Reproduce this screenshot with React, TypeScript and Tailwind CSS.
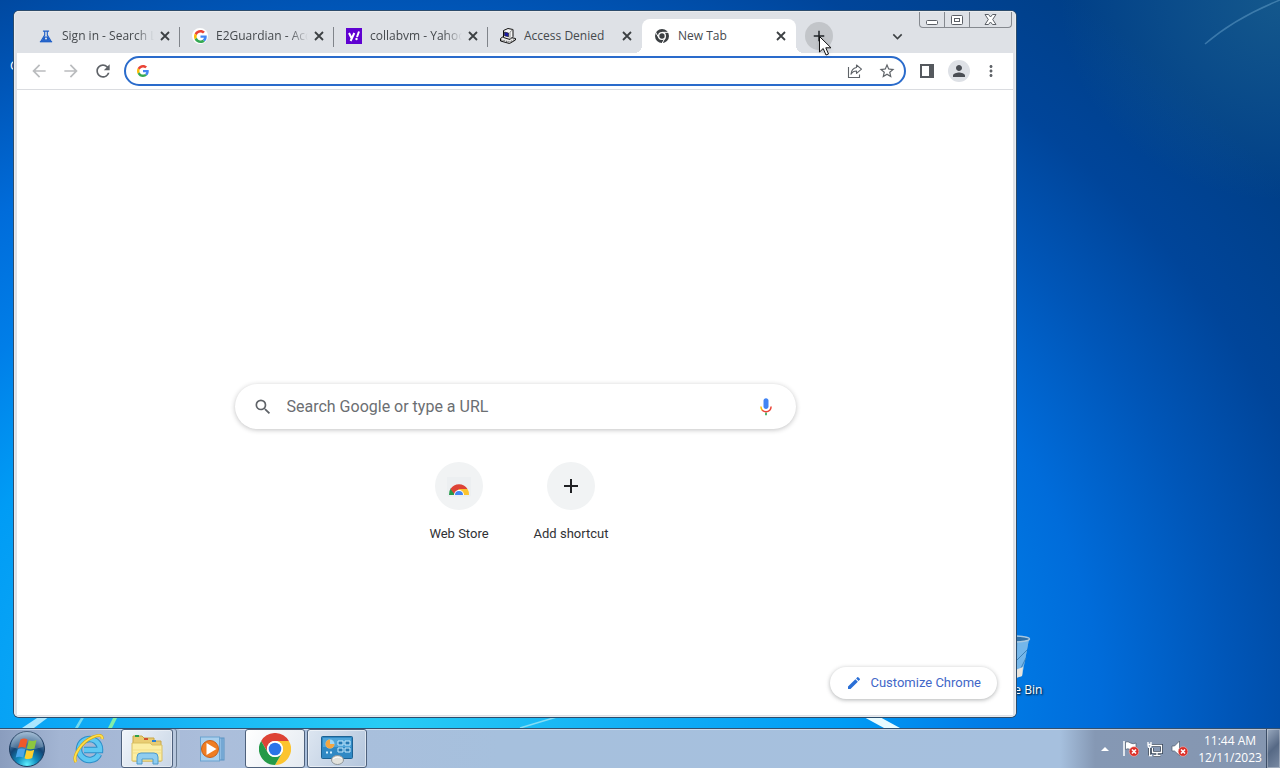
import type { ReactNode } from "react";
import {
  MdAdd,
  MdArrowBack,
  MdArrowForward,
  MdEdit,
  MdKeyboardArrowDown,
  MdMoreVert,
  MdPerson,
  MdRefresh,
  MdSearch,
  MdStarBorder,
} from "react-icons/md";

function GoogleIcon({ size = 16 }: { size?: number }) {
  return (
    <svg width={size} height={size} viewBox="0 0 48 48" aria-hidden="true">
      <path fill="#EA4335" d="M24 9.5c3.54 0 6.71 1.22 9.21 3.6l6.85-6.85C35.9 2.38 30.47 0 24 0 14.62 0 6.51 5.38 2.56 13.22l7.98 6.19C12.43 13.72 17.74 9.5 24 9.5z" />
      <path fill="#4285F4" d="M46.98 24.55c0-1.57-.15-3.09-.38-4.55H24v9.02h12.94c-.58 2.96-2.26 5.48-4.78 7.18l7.73 6c4.51-4.18 7.09-10.36 7.09-17.65z" />
      <path fill="#FBBC05" d="M10.53 28.59c-.48-1.45-.76-2.99-.76-4.59s.27-3.14.76-4.59l-7.98-6.19C.92 16.46 0 20.12 0 24c0 3.88.92 7.54 2.56 10.78l7.97-6.19z" />
      <path fill="#34A853" d="M24 48c6.48 0 11.93-2.13 15.89-5.81l-7.73-6c-2.15 1.45-4.92 2.3-8.16 2.3-6.26 0-11.57-4.22-13.47-9.91l-7.98 6.19C6.51 42.62 14.62 48 24 48z" />
    </svg>
  );
}

function ChromeMono() {
  return (
    <svg width="16" height="16" viewBox="0 0 48 48" aria-hidden="true">
      <circle cx="24" cy="24" r="21" fill="#3c4043" />
      <path d="M24 13H45M14.5 29.5L4 11.5M33.5 29.5L23 48" stroke="#fff" strokeWidth="3" />
      <circle cx="24" cy="24" r="12" fill="#fff" />
      <circle cx="24" cy="24" r="8" fill="#3c4043" />
    </svg>
  );
}

function ChromeLogo() {
  return (
    <svg width="32" height="32" viewBox="0 0 48 48" aria-hidden="true">
      <path fill="#dd4336" d="M3.2 12A24 24 0 0 1 44.8 12H24A12 12 0 0 0 13.6 30Z" />
      <path fill="#fcc42f" d="M44.8 12A24 24 0 0 1 24 48L34.4 30A12 12 0 0 0 24 12Z" />
      <path fill="#249a48" d="M24 48A24 24 0 0 1 3.2 12L13.6 30A12 12 0 0 0 34.4 30Z" />
      <circle cx="24" cy="24" r="12" fill="#fff" />
      <circle cx="24" cy="24" r="9.5" fill="#2b74e8" />
    </svg>
  );
}

function FlaskIcon() {
  return (
    <svg width="14" height="14" viewBox="0 0 16 16" aria-hidden="true">
      <path d="M4.5 2.5H11.5M6.5 2.5V7L2.5 13.5H13.5L9.500 7V2.500" fill="none" stroke="#1f5fc8" strokeWidth="1.3" strokeLinejoin="round" />
      <path d="M5.800 8.500H10.200L13 13.300H3Z" fill="#1f5fc8" />
      <path d="M1 14.500H15" stroke="#1f5fc8" strokeWidth="1.5" />
      <circle cx="8" cy="10.800" r="1.2" fill="#dee1e6" />
    </svg>
  );
}

function YahooIcon() {
  return (
    <svg width="16" height="16" viewBox="0 0 16 16" aria-hidden="true">
      <rect width="16" height="16" fill="#5f01d1" />
      <path d="M3 5L5.600 10.200M8.300 5L4.600 13M11 9L13 3.500" fill="none" stroke="#fff" strokeWidth="2" />
      <circle cx="10.500" cy="11" r="1.200" fill="#fff" />
    </svg>
  );
}

function ComputerIcon() {
  return (
    <svg width="16" height="16" viewBox="0 0 16 16" aria-hidden="true" stroke="#111" strokeWidth="1" strokeLinejoin="round">
      <path d="M.5 10.500L4 8L15.500 10.500V12L9.500 15.500L.5 13Z" fill="#e9e9e9" />
      <path d="M1 12L9.500 14L15 11.500" fill="none" stroke="#555" strokeDasharray="1.500 1" />
      <path d="M3.500 2.500L8 .5L13 1.500V8.500L10 11.500L3.500 9.500Z" fill="#f6f6f6" />
      <path d="M10 4V11.500M10 4L13 1.500" fill="none" stroke="#666" strokeWidth=".7" />
      <path d="M4.500 4L8.500 5V8.800L4.500 7.800Z" fill="#1a1aa8" stroke="#111" strokeWidth=".6" />
    </svg>
  );
}

function CloseIcon() {
  return (
    <svg width="10" height="10" viewBox="0 0 10 10" stroke="currentColor" strokeWidth="1.8" aria-hidden="true">
      <path d="M1 1L9 9M9 1L1 9" />
    </svg>
  );
}

function ShareIcon() {
  return (
    <svg width="18" height="18" viewBox="0 0 18 18" fill="none" stroke="#5f6368" strokeWidth="1.1" aria-hidden="true">
      <path d="M2.500 5V15.500H13.500V12.500" />
      <path d="M10.500 3L15.500 7.200L10.500 11.400V9C7.800 9 6.200 10 5 12.200C5.300 8.600 7.200 6 10.500 5.500Z" strokeLinejoin="round" />
    </svg>
  );
}

function MicIcon() {
  return (
    <svg width="20" height="20" viewBox="0 0 24 24" aria-hidden="true">
      <path fill="#4285f4" d="M12 14.500c1.700 0 3-1.300 3-3V4.500c0-1.700-1.300-3-3-3s-3 1.300-3 3v7c0 1.700 1.300 3 3 3z" />
      <path fill="#34a853" d="M11 18.500h2V22h-2z" />
      <path fill="none" stroke="#fbbc04" strokeWidth="1.800" d="M5.900 11.500c0 1.900.7 3.500 1.800 4.500" />
      <path fill="none" stroke="#ea4335" strokeWidth="1.800" d="M7.500 15.800c2.400 2.400 6.600 2.400 9 0c1-1 1.600-2.500 1.600-4.300" />
    </svg>
  );
}

function WebStoreIcon() {
  return (
    <svg width="24" height="24" viewBox="0 0 24 24" aria-hidden="true">
      <path d="M0 3H24V21a2 2 0 0 1-2 2H2a2 2 0 0 1-2-2Z" fill="#eceff1" />
      <path d="M2 21A10 10 0 0 1 4 14L9 21Z" fill="#249a48" />
      <path d="M3.500 15A10 10 0 0 1 20.500 15H12L8 21Z" fill="#dd4336" />
      <path d="M12 15H20.500A10 10 0 0 1 22 21H12Z" fill="#fcc42f" />
      <path d="M7 21A5 5 0 0 1 17 21Z" fill="#fff" />
      <path d="M8 21A4 4 0 0 1 16 21Z" fill="#4285f4" />
    </svg>
  );
}

function CursorIcon() {
  return (
    <svg width="14" height="21" viewBox="0 0 14 21" aria-hidden="true" className="pointer-events-none absolute top-[14px] left-[14px] drop-shadow">
      <path d="M.5 .5V16L4.200 12.500L7 19L9.500 18L6.800 11.800H12Z" fill="#fff" stroke="#111" />
    </svg>
  );
}

function StartOrb() {
  return (
    <svg width="38" height="38" viewBox="0 0 38 38" aria-hidden="true">
      <defs>
        <radialGradient id="orb" cx=".5" cy=".95" r=".95">
          <stop offset="0" stopColor="#5ff0ff" />
          <stop offset=".3" stopColor="#128fc0" />
          <stop offset=".6" stopColor="#134575" />
          <stop offset="1" stopColor="#8fb0cf" />
        </radialGradient>
      </defs>
      <circle cx="19" cy="19" r="17.500" fill="url(#orb)" stroke="#1d3b5e" />
      <path d="M3 17A16 16 0 0 1 35 17Q19 22 3 17Z" fill="#fff" opacity=".22" />
      <path d="M12.500 9.500Q16 7.500 19.500 9.500L17.500 18Q14 16.200 10 18Z" fill="#f0592a" />
      <path d="M20.800 10.300Q24.500 12 28.500 10L26.500 18.500Q22.500 20 18.800 18.500Z" fill="#8cc63f" />
      <path d="M9.700 19.300Q13.500 17.500 17.200 19.300L15.200 27.500Q11.500 25.800 7.700 27.500Z" fill="#4aa5ea" />
      <path d="M18.500 20Q22.200 21.500 26.200 19.800L24.200 28Q20.200 30 16.500 28.200Z" fill="#fdd02f" />
    </svg>
  );
}

function ExplorerE() {
  return (
    <svg width="32" height="32" viewBox="0 0 32 32" aria-hidden="true">
      <path d="M26 21A10.500 10.500 0 1 1 27 17H11" fill="none" stroke="#2c8fc9" strokeWidth="6.500" />
      <path d="M26 21A10.500 10.500 0 1 1 27 17H11" fill="none" stroke="#5fc8f2" strokeWidth="4.500" />
      <path d="M3 29C-1 24 8 9 20 4C26 1.500 30 2 29 6" fill="none" stroke="#d9a916" strokeWidth="3" />
      <path d="M3 29C-1 24 8 9 20 4C26 1.500 30 2 29 6" fill="none" stroke="#ffe04a" strokeWidth="1.800" />
    </svg>
  );
}

function FolderIcon() {
  return (
    <svg width="34" height="32" viewBox="0 0 34 32" aria-hidden="true">
      <path d="M3 3H12L14 5H24V8H31V28H3Z" fill="#e9cd73" stroke="#c9a748" />
      <path d="M5 3H9" stroke="#2fa04a" strokeWidth="2" />
      <path d="M14 6H18" stroke="#d0502d" strokeWidth="2" />
      <path d="M22 8H26" stroke="#2e80d0" strokeWidth="2" />
      <path d="M2 10H20L22 12H32V28H2Z" fill="#fbeea4" stroke="#d9bf62" />
      <path d="M3 17H31M3 20H31" stroke="#f3dd84" />
      <path d="M7 31V24Q7 20 11 20H24Q28 20 28 24V31H23V26H12V31Z" fill="#8fcdf0" stroke="#4e9acb" />
    </svg>
  );
}

function PlayerIcon() {
  return (
    <svg width="28" height="28" viewBox="0 0 28 28" aria-hidden="true">
      <rect x="5" y="3" width="20" height="22" fill="#8fbce2" stroke="#5b93c4" />
      <path d="M23 3V25" stroke="#5b93c4" />
      <rect x="1.500" y="2" width="19" height="24" fill="#a9d0ee" stroke="#6ba3d0" />
      <circle cx="11" cy="14" r="8.500" fill="#ef7d22" stroke="#c9601a" />
      <path d="M7.500 8L17.500 14L7.500 20Z" fill="#fff" />
    </svg>
  );
}

function ControlPanelIcon() {
  return (
    <svg width="34" height="32" viewBox="0 0 34 32" aria-hidden="true">
      <rect x="1.500" y="3.500" width="31" height="22" rx="1" fill="#3089c4" stroke="#1c6293" />
      <rect x="3" y="5" width="28" height="9" fill="#4fa5d9" />
      <circle cx="10" cy="11" r="4.500" fill="#9ed7f5" />
      <path d="M10 11V6.500A4.500 4.500 0 1 0 14.500 11Z" fill="#f4a640" />
      <path d="M18 8H23V12H18ZM25 8H30V12H25ZM18 15H23V19H18ZM25 15H30V19H25Z" fill="#2479b3" stroke="#c8ecff" />
      <path d="M6 19.500H8M10 19.500H12" stroke="#d6f2ff" strokeWidth="2" />
      <ellipse cx="17.500" cy="27" rx="6" ry="4.500" fill="#e2e2dc" stroke="#8f9699" />
      <path d="M13 26Q17 22.500 22 25.500" fill="none" stroke="#fff" />
    </svg>
  );
}

function ErrorBadge() {
  return (
    <>
      <circle cx="12" cy="11.500" r="4.800" fill="#dc2f28" stroke="#f3b7b2" strokeWidth=".6" />
      <path d="M10 9.500L14 13.500M14 9.500L10 13.500" stroke="#fff" strokeWidth="1.600" />
    </>
  );
}

function IconButton({ label, children }: { label: string; children: ReactNode }) {
  return (
    <button aria-label={label} className="flex size-7 shrink-0 items-center justify-center rounded-full text-[#5f6368]">
      {children}
    </button>
  );
}

const tabs = [
  { title: "Sign in - Search L", icon: <FlaskIcon /> },
  { title: "E2Guardian - Acc", icon: <GoogleIcon size={13} />, plate: true },
  { title: "collabvm - Yahoo", icon: <YahooIcon /> },
  { title: "Access Denied", icon: <ComputerIcon /> },
  { title: "New Tab", icon: <ChromeMono />, active: true },
];

type TabProps = {
  title: string;
  icon: ReactNode;
  active?: boolean;
  plate?: boolean;
  divider: boolean;
};

function Tab({ title, icon, active, plate, divider }: TabProps) {
  return (
    <div className={`relative flex h-[34px] w-[154px] items-center pr-[7px] pl-3 ${active ? "rounded-t-lg bg-white" : ""}`}>
      <button className="flex h-full min-w-0 flex-1 items-center gap-2 text-left text-xs text-[#45494d]">
        <span className={`flex size-4 shrink-0 items-center justify-center rounded-full ${plate ? "bg-white" : ""}`}>{icon}</span>
        <span className={`w-[92px] overflow-hidden whitespace-nowrap ${divider ? "mask-r-from-80%" : ""}`}>{title}</span>
      </button>
      <button aria-label={`Close ${title}`} className="flex size-4 shrink-0 items-center justify-center text-[#3c4043]">
        <CloseIcon />
      </button>
      {divider && <span className="absolute top-2 right-0 h-5 w-px bg-[#80848a]" />}
      {active && (
        <>
          <span className="absolute bottom-0 -left-2 size-2 bg-[radial-gradient(circle_at_0_0,transparent_8px,white_8px)]" />
          <span className="absolute -right-2 bottom-0 size-2 bg-[radial-gradient(circle_at_100%_0,transparent_8px,white_8px)]" />
        </>
      )}
    </div>
  );
}

function WindowControls() {
  return (
    <div className="flex h-4 self-start overflow-hidden rounded-b-[4px] border border-t-0 border-[#85898f] text-[#5b5f66]">
      <button aria-label="Minimize" className="flex w-[25px] items-center justify-center border-r border-[#85898f]">
        <svg width="14" height="12" viewBox="0 0 14 12" fill="#fff" stroke="currentColor">
          <rect x="1.500" y="6.500" width="11" height="4" rx="1" />
        </svg>
      </button>
      <button aria-label="Maximize" className="flex w-[25px] items-center justify-center border-r border-[#85898f]">
        <svg width="12" height="12" viewBox="0 0 12 12" fill="#fff" stroke="currentColor">
          <rect x=".5" y="1.500" width="11" height="9" rx="1" />
          <rect x="3.500" y="4.500" width="5" height="3" />
        </svg>
      </button>
      <button aria-label="Close window" className="flex w-[41px] items-center justify-center">
        <svg width="13" height="11" viewBox="0 0 13 11" fill="#fff" stroke="currentColor">
          <path d="M1 .5H4.500L6.500 3L8.500 .5H12L8.700 5.500L12 10.500H8.500L6.500 8L4.500 10.500H1L4.300 5.500Z" />
        </svg>
      </button>
    </div>
  );
}

function Toolbar() {
  return (
    <div className="flex h-[37px] items-center gap-[7px] border-b border-[#dadce0] bg-white px-2">
      <div className="flex gap-1">
        <button aria-label="Back" className="flex size-7 items-center justify-center text-[#babcbe]">
          <MdArrowBack size={20} />
        </button>
        <button aria-label="Forward" className="flex size-7 items-center justify-center text-[#babcbe]">
          <MdArrowForward size={20} />
        </button>
        <IconButton label="Reload">
          <MdRefresh size={20} />
        </IconButton>
      </div>
      <div className="flex h-[30px] flex-1 items-center rounded-full border-2 border-[#2a6bcb] bg-white pr-[3px] pl-[11px]">
        <GoogleIcon size={12} />
        <input aria-label="Address and search bar" className="ml-2 min-w-0 flex-1 bg-transparent text-sm outline-none" />
        <div className="flex gap-1">
          <IconButton label="Share this page">
            <ShareIcon />
          </IconButton>
          <IconButton label="Bookmark this tab">
            <MdStarBorder size={18} />
          </IconButton>
        </div>
      </div>
      <div className="flex gap-1">
        <IconButton label="Side panel">
          <svg width="14" height="14" viewBox="0 0 14 14" aria-hidden="true">
            <path d="M1 1H13V13H1Z" fill="none" stroke="#55595e" strokeWidth="2" />
            <path d="M9 1H13V13H9Z" fill="#55595e" />
          </svg>
        </IconButton>
        <IconButton label="Profile">
          <span className="flex size-[22px] items-center justify-center rounded-full bg-[#dee1e6]">
            <MdPerson size={18} color="#4a4e54" />
          </span>
        </IconButton>
        <IconButton label="Menu">
          <MdMoreVert size={18} />
        </IconButton>
      </div>
    </div>
  );
}

function NewTabPage() {
  return (
    <main className="relative flex flex-1 flex-col items-center bg-white pt-[294px] font-[Roboto,sans-serif]">
      <label className="flex h-[45px] w-full max-w-[561px] items-center rounded-full bg-white pr-5 pl-[18px] shadow-[0_1px_5px_rgba(32,33,36,0.28)]">
        <MdSearch size={20} color="#5f6368" />
        <input
          aria-label="Search Google or type a URL"
          placeholder="Search Google or type a URL"
          className="ml-[14px] min-w-0 flex-1 bg-transparent text-base outline-none placeholder:text-[#6b6e72]"
        />
        <button aria-label="Search by voice">
          <MicIcon />
        </button>
      </label>

      <div className="mt-[33px] flex">
        <a href="#web-store" className="flex w-28 flex-col items-center gap-[14px] text-[13px] leading-5 text-[#303134]">
          <span className="flex size-12 items-center justify-center rounded-full bg-[#f1f3f4]">
            <WebStoreIcon />
          </span>
          Web Store
        </a>
        <button className="flex w-28 flex-col items-center gap-[14px] text-[13px] leading-5 text-[#303134]">
          <span className="flex size-12 items-center justify-center rounded-full bg-[#f1f3f4]">
            <MdAdd size={24} color="#202124" />
          </span>
          Add shortcut
        </button>
      </div>

      <button className="absolute right-4 bottom-4 flex h-8 items-center gap-2 rounded-full bg-white px-4 text-[13px] text-[#4267c8] shadow-[0_1px_4px_rgba(60,64,67,0.4)]">
        <MdEdit size={16} color="#2a6fd6" />
        Customize Chrome
      </button>
    </main>
  );
}

function BrowserWindow() {
  return (
    <section className="absolute top-[11px] right-[264px] bottom-[11px] left-[14px] flex flex-col rounded-[5px] bg-[#dee1e6] px-[3px] pt-px pb-[2px] shadow-[inset_0_0_0_1px_#e9ebee,0_0_0_1px_#2c4c6c]">
      <div className="flex h-[41px] items-end pl-[9px]">
        {tabs.map((tab, i) => (
          <Tab key={tab.title} {...tab} divider={i < 3} />
        ))}
        <div className="relative mb-[3px] ml-[9px] flex">
          <button aria-label="New tab" className="flex size-7 items-center justify-center rounded-full bg-[#c2c5c9] text-[#202428]">
            <MdAdd size={18} />
          </button>
          <CursorIcon />
        </div>
        <span className="flex-1" />
        <button aria-label="Search tabs" className="mr-2 mb-[3px] flex size-7 items-center justify-center text-[#3c4043]">
          <MdKeyboardArrowDown size={19} />
        </button>
        <div className="flex self-start pr-px">
          <WindowControls />
        </div>
      </div>
      <Toolbar />
      <NewTabPage />
    </section>
  );
}

function Wallpaper() {
  return (
    <svg className="absolute inset-0 size-full" viewBox="0 0 1280 728" preserveAspectRatio="none" aria-hidden="true">
      <defs>
        <radialGradient id="haze" cx="1" cy="0" r="1">
          <stop offset="0" stopColor="#3f8c94" stopOpacity=".32" />
          <stop offset="1" stopColor="#3f8c94" stopOpacity="0" />
        </radialGradient>
      </defs>
      <rect x="1060" width="220" height="200" fill="url(#haze)" />
      <path d="M1280 0Q1235 18 1205 44" fill="none" stroke="#8fc6e8" strokeWidth="1.500" opacity=".35" />
      <path d="M22 728L40 716H50L34 728Z" fill="#c9f2ff" opacity=".85" />
      <path d="M75 728L82 716H85L78 728Z" fill="#9ff0ee" opacity=".7" />
      <path d="M108 728L114 716H118L112 728Z" fill="#8df5a0" opacity=".9" />
      <path d="M520 728L560 716" stroke="#9fe6f5" strokeWidth="1.500" opacity=".8" />
      <path d="M862 716H878L900 728H884Z" fill="#e8fbff" />
    </svg>
  );
}

function RecycleBin() {
  return (
    <a href="#recycle-bin" className="absolute right-[232px] bottom-[30px] flex w-[74px] flex-col items-center text-xs text-white [text-shadow:1px_1px_2px_#000]">
      <svg width="40" height="48" viewBox="0 0 40 48" aria-hidden="true">
        <path d="M3 5L9 42Q20 46 31 42L38 5Z" fill="#5fa8e0" />
        <path d="M31 42L38 5H27L24 44Z" fill="#74b6ea" />
        <path d="M36 16L26 26M35 24L27 40" stroke="#3c83bb" />
        <path d="M24 36L32 33L31 42L25 44Z" fill="#e8e4dc" />
        <ellipse cx="20.500" cy="5" rx="18" ry="3" fill="#2f70a8" stroke="#a9c8e0" strokeWidth="1.500" />
      </svg>
      <span className="whitespace-nowrap">Recycle Bin</span>
    </a>
  );
}

const apps = [
  { name: "Internet Explorer", icon: <ExplorerE />, style: "border-transparent" },
  { name: "Windows Explorer", icon: <FolderIcon />, style: "border-[#4e617c] bg-[linear-gradient(120deg,#f0f5fa,#c9d6e6)] mr-2 ring-1 ring-white/40 ring-inset shadow-[3px_0_0_#b7c7dc,4px_0_0_#65788f,7px_0_0_#b0c2d9]" },
  { name: "Windows Media Player", icon: <PlayerIcon />, style: "border-transparent" },
  { name: "Google Chrome", icon: <ChromeLogo />, style: "border-[#4e617c] bg-[linear-gradient(120deg,#ffffff,#e4eaf1)]" },
  { name: "Control Panel", icon: <ControlPanelIcon />, style: "border-[#4e617c] bg-[linear-gradient(120deg,#dde6f1,#b3c5dc)] ring-1 ring-white/50 ring-inset" },
];

function Taskbar() {
  return (
    <footer className="flex h-10 border-t border-[#33506f] bg-[linear-gradient(90deg,#8a9dbe_0,#a3b5d3_60px,#abbedb_220px,#a6c0dd_500px,#a6c0de_calc(100%-220px),#8598b4_calc(100%-185px),#8596b0_100%)] shadow-[inset_0_1px_0_rgba(255,255,255,0.45)]">
      <button aria-label="Start" className="flex w-[54px] items-center justify-center">
        <StartOrb />
      </button>
      <div className="ml-[5px] flex gap-[2px]">
        {apps.map((app) => (
          <div key={app.name} className="flex w-15">
            <button aria-label={app.name} className={`flex flex-1 items-center justify-center rounded-[3px] border ${app.style}`}>
              {app.icon}
            </button>
          </div>
        ))}
      </div>
      <span className="flex-1" />
      <div className="flex items-center gap-2 text-xs text-white">
        <button aria-label="Show hidden icons" className="mr-[3px] flex h-4 w-3 items-center justify-center">
          <svg width="8" height="4" viewBox="0 0 8 4" fill="#fff">
            <path d="M4 0L8 4H0Z" />
          </svg>
        </button>
        <button aria-label="Action Center">
          <svg width="17" height="17" viewBox="0 0 17 17">
            <path d="M2 1V16" stroke="#fff" strokeWidth="1.500" />
            <path d="M3.500 2Q6 1 8.500 3Q11 4.500 14 3V10Q10 11 8 9.500Q6 8 3.500 9.500Z" fill="#fff" stroke="#4d5a6c" strokeWidth=".7" />
            <ErrorBadge />
          </svg>
        </button>
        <button aria-label="Network">
          <svg width="16" height="16" viewBox="0 0 16 16" fill="none">
            <path d="M4.500 4.500H14.500V11.500H5.500V7M10 11.500V14M6.500 14.500H13.500M2.500 7V14.500" stroke="#39475a" strokeWidth="3" />
            <path d="M4.500 4.500H14.500V11.500H5.500V7M10 11.500V14M6.500 14.500H13.500M2.500 7V14.500H5M1 1V3.500H4V1M1 3.500Q1 6.500 2.500 6.500Q4 6.500 4 3.500" stroke="#fff" strokeWidth="1.300" />
          </svg>
        </button>
        <button aria-label="Volume">
          <svg width="17" height="17" viewBox="0 0 17 17">
            <path d="M1 6H3.500L8.500 1V15.500L3.500 11H1Z" fill="#fff" stroke="#4d5a6c" strokeWidth=".7" />
            <ErrorBadge />
          </svg>
        </button>
      </div>
      <button className="mx-[6px] ml-3 flex w-[60px] flex-col items-center justify-center text-xs leading-[17px] text-white">
        <span>11:44 AM</span>
        <span>12/11/2023</span>
      </button>
      <button aria-label="Show desktop" className="w-[14px] border-l border-[#3c4d66] bg-[linear-gradient(135deg,#9aaabf,#566985_50%,#7a8ba4)] ring-1 ring-white/30 ring-inset" />
    </footer>
  );
}

export default function App() {
  return (
    <div className="flex h-screen flex-col overflow-hidden font-['Open_Sans','Noto_Sans',sans-serif]">
      <div className="relative flex-1 bg-[radial-gradient(920px_780px_at_30%_100%,#28ccf5_0%,#10acf5_30%,#009cf5_50%,#007ee8_64%,#006cda_78%,#0056b8_92%,#00459a_105%,#003f88_120%)]">
        <Wallpaper />
        <span className="absolute top-[58px] left-[10px] text-xs text-white">Google Chrome</span>
        <RecycleBin />
        <BrowserWindow />
      </div>
      <Taskbar />
    </div>
  );
}
